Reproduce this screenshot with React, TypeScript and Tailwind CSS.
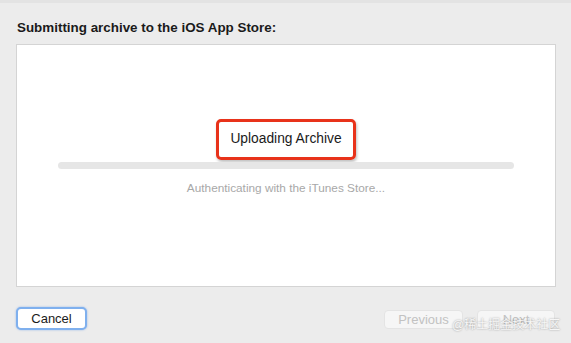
import React from "react";

export default function App() {
  return (
    <div
      className="relative w-[571px] h-[343px] bg-[#ececec] overflow-hidden"
      style={{ fontFamily: '"Liberation Sans", Arial, sans-serif' }}
    >
      <div className="h-[3px] bg-[#e3e3e3]" />
      <div className="pl-[17px] pt-[17px] text-[13.4px] font-bold text-[#1a1a1a] leading-[16px]">
        Submitting archive to the iOS App Store:
      </div>
      <div className="ml-[16px] mt-[8px] w-[540px] h-[243px] bg-white border border-[#d4d4d4] flex flex-col items-center">
        <div className="mt-[74px] w-[140px] h-[41px] rounded-[5px] border-[3px] border-[#e8321a] shadow-[1px_2px_3px_rgba(0,0,0,0.25)] flex items-center justify-center text-[13.8px] text-[#1a1a1a]">
          Uploading Archive
        </div>
        <div className="mt-[2px] w-[456px] h-[7px] rounded-full bg-[#e6e6e6]" />
        <div className="mt-[12px] text-[11.8px] text-[#a8a8a8] leading-[14px]">
          Authenticating with the iTunes Store...
        </div>
      </div>
      <div className="flex items-center px-[16px] mt-[20px]">
        <div className="w-[71px] h-[23px] rounded-[5px] bg-white border-[2px] border-[#7fb0ee] shadow-[0_0_2px_rgba(80,140,230,0.6)] flex items-center justify-center text-[13px] text-[#1a1a1a]">
          Cancel
        </div>
        <div className="flex-1" />
        <div className="mt-[2px] w-[79px] h-[19px] rounded-[4px] bg-[#f6f6f6] border border-[#e4e4e4] flex items-center justify-center text-[13px] text-[#c2c2c2]">
          Previous
        </div>
        <div className="ml-[14px] mt-[2px] w-[78px] h-[19px] rounded-[4px] bg-[#f6f6f6] border border-[#e4e4e4] flex items-center justify-center text-[13px] text-[#c2c2c2]">
          Next
        </div>
      </div>
      <div
        className="absolute left-[452px] top-[317px] text-[12px] text-[#f6f6f6] leading-[16px] [text-shadow:0_0_2px_rgba(0,0,0,0.4)]"
        style={{ fontFamily: '"Liberation Sans", "Noto Sans CJK SC", sans-serif' }}
      >
        @稀土掘金技术社区
      </div>
    </div>
  );
}
